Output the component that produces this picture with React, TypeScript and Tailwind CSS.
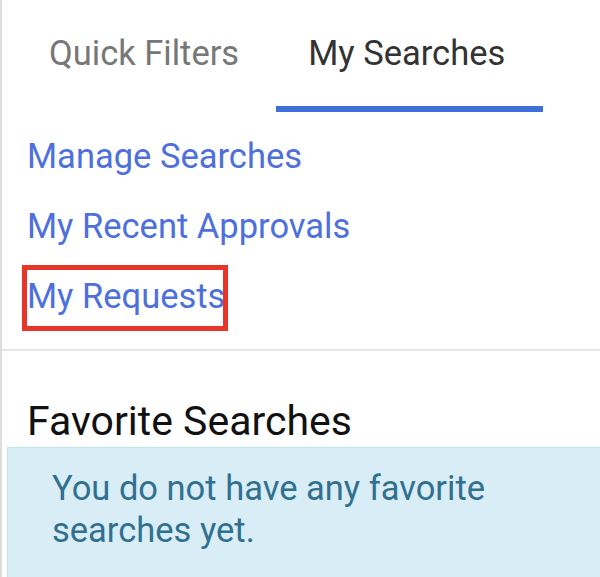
const links = ["Manage Searches", "My Recent Approvals", "My Requests"];

export default function App() {
  return (
    <div className="w-[600px] h-[577px] overflow-hidden bg-white font-['Roboto',sans-serif]">
      <div className="w-[620px] min-h-[577px] border-l-2 border-[#dddddd]">
        <div className="flex pl-[12px]">
          <button className="pl-[35px] pr-[37px] pt-[33px] pb-[33px] border-b-[6px] border-transparent text-[34.5px] leading-[40px] text-[#777777]">
            Quick Filters
          </button>
          <button className="pl-[32px] pr-[38px] pt-[33px] pb-[33px] border-b-[6px] border-[#3e6fd9] text-[34.5px] leading-[40px] text-[#333333]">
            My Searches
          </button>
        </div>

        <div className="flex flex-col gap-[30px] pl-[25px] pt-[24px] pb-[33px] border-b-2 border-[#e6e6e6]">
          {links.map((link) => (
            <div key={link} className="relative">
              <a href="#" className="text-[34.5px] leading-[40px] text-[#4d70dd]">
                {link}
              </a>
              {link === "My Requests" && (
                <span className="absolute left-[-5px] top-[-11px] w-[206px] h-[66px] border-[5px] border-[#e8352a] pointer-events-none" />
              )}
            </div>
          ))}
        </div>

        <div className="pt-[46px]">
          <h3 className="pl-[25px] text-[41px] leading-[48px] text-[#111111] mb-[2px]">
            Favorite Searches
          </h3>
          <div className="ml-[5px] border border-[#bce8f1] bg-[#d9edf7] pl-[44px] pr-[44px] pt-[19px] pb-[40px] text-[34.5px] leading-[42px] text-[#31708f]">
            You do not have any favorite searches yet.
          </div>
        </div>
      </div>
    </div>
  );
}
